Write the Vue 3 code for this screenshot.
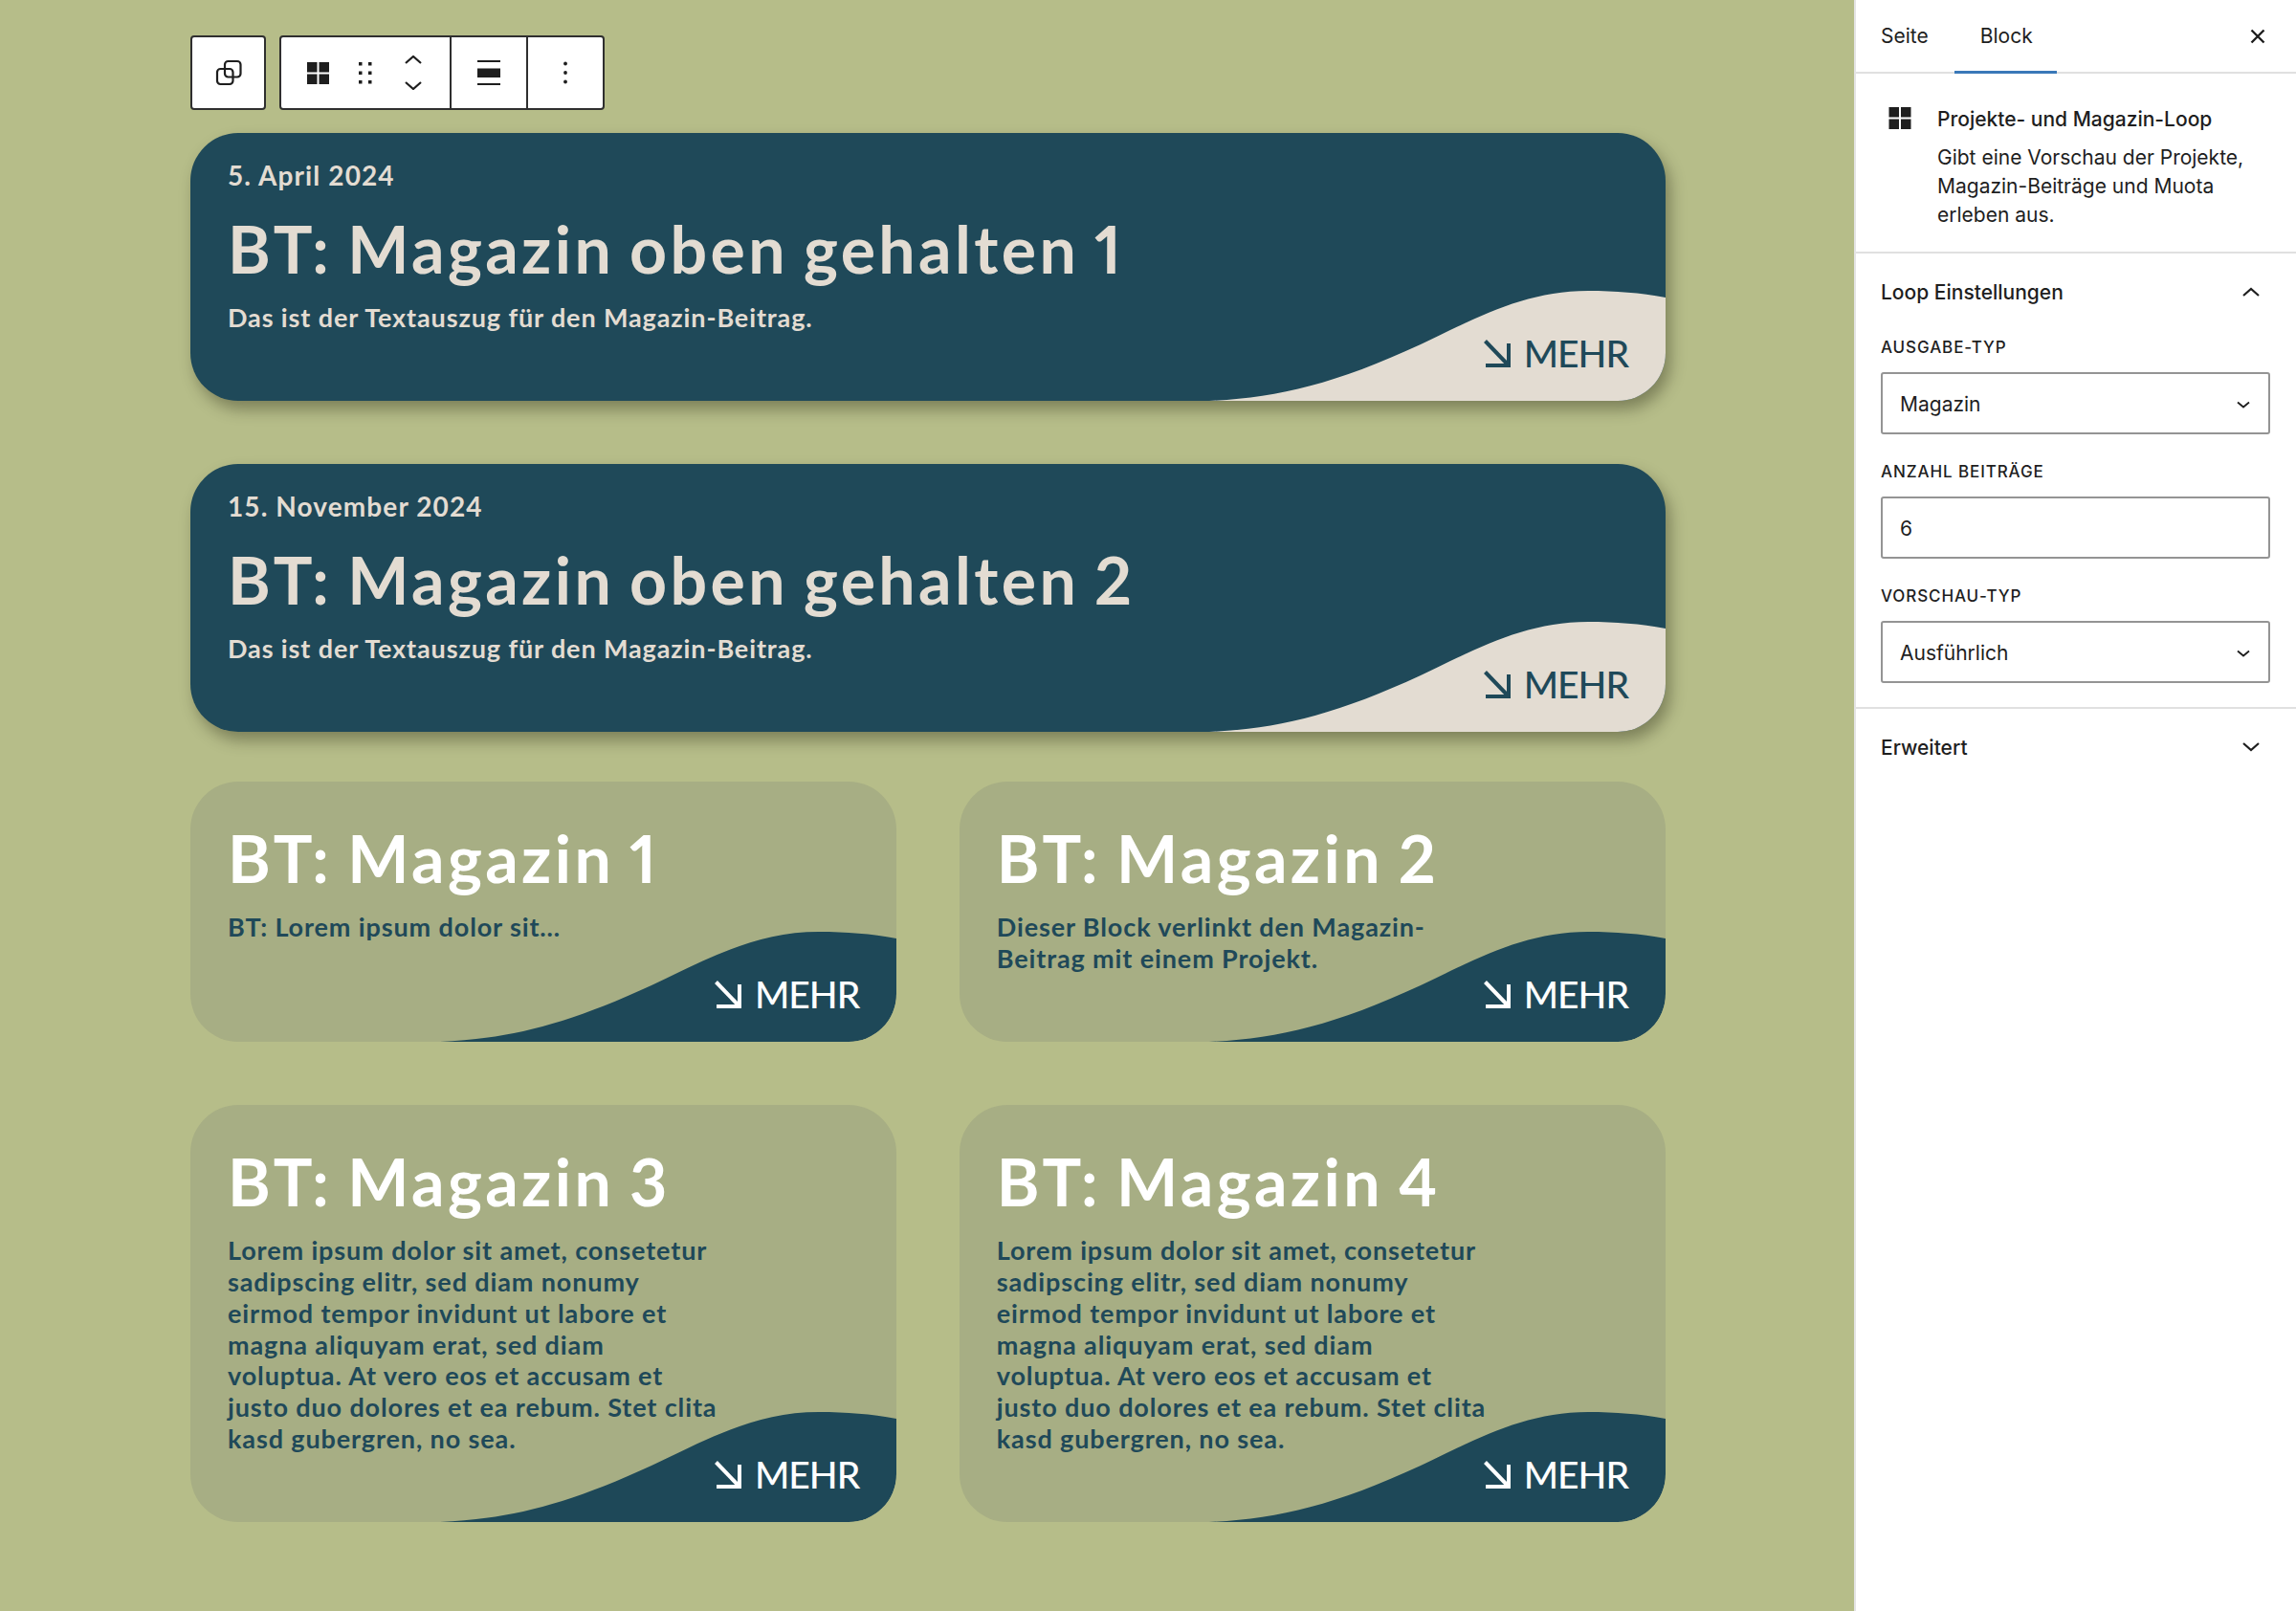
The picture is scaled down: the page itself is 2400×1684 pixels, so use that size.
<script setup>
const featured = [
  { id: 1, date: '5. April 2024', title: 'BT: Magazin oben gehalten 1', text: 'Das ist der Textauszug für den Magazin-Beitrag.' },
  { id: 2, date: '15. November 2024', title: 'BT: Magazin oben gehalten 2', text: 'Das ist der Textauszug für den Magazin-Beitrag.' },
];

const lorem = 'Lorem ipsum dolor sit amet, consetetur\nsadipscing elitr, sed diam nonumy\neirmod tempor invidunt ut labore et\nmagna aliquyam erat, sed diam\nvoluptua. At vero eos et accusam et\njusto duo dolores et ea rebum. Stet clita\nkasd gubergren, no sea.';

const posts = [
  { id: 1, title: 'BT: Magazin 1', text: 'BT: Lorem ipsum dolor sit…' },
  { id: 2, title: 'BT: Magazin 2', text: 'Dieser Block verlinkt den Magazin-\nBeitrag mit einem Projekt.' },
  { id: 3, title: 'BT: Magazin 3', text: lorem },
  { id: 4, title: 'BT: Magazin 4', text: lorem },
];

const wave = 'M0 115C70 112 130 98 221 56C280 28 330 0 396 0C425 0 450 2 477 7V115H0Z';
</script>

<template>
  <div class="editor">
    <main class="canvas">
      <div class="toolbar">
        <div class="tool-group single">
          <svg width="28" height="28" viewBox="0 0 28 28" fill="none" stroke="#1e1e1e" stroke-width="2.2">
            <rect x="2" y="10" width="16.5" height="16" rx="3.5" />
            <rect x="10" y="2" width="16.5" height="16.5" rx="3.5" />
          </svg>
        </div>
        <div class="tool-group">
          <div class="tool-cell first">
            <svg width="23" height="23" viewBox="0 0 23 23" fill="#1e1e1e">
              <rect width="10.5" height="10.5" />
              <rect x="12.5" width="10.5" height="10.5" />
              <rect y="12.5" width="10.5" height="10.5" />
              <rect x="12.5" y="12.5" width="10.5" height="10.5" />
            </svg>
            <svg width="14" height="24" viewBox="0 0 14 24" fill="#1e1e1e">
              <rect x="0" y="1" width="3.5" height="3.5" /><rect x="10" y="1" width="3.5" height="3.5" />
              <rect x="0" y="10.5" width="3.5" height="3.5" /><rect x="10" y="10.5" width="3.5" height="3.5" />
              <rect x="0" y="20" width="3.5" height="3.5" /><rect x="10" y="20" width="3.5" height="3.5" />
            </svg>
            <svg width="18" height="36" viewBox="0 0 18 36" fill="none" stroke="#1e1e1e" stroke-width="2.2">
              <path d="M1 8L9 1L17 8" />
              <path d="M1 28L9 35L17 28" />
            </svg>
          </div>
          <div class="tool-cell align">
            <svg width="24" height="26" viewBox="0 0 24 26" fill="#1e1e1e">
              <rect width="24" height="2" />
              <rect y="8.5" width="24" height="9.5" />
              <rect y="24" width="24" height="2" />
            </svg>
          </div>
          <div class="tool-cell more">
            <svg width="4" height="24" viewBox="0 0 4 24" fill="#1e1e1e">
              <circle cx="2" cy="2.5" r="1.9" />
              <circle cx="2" cy="12" r="1.9" />
              <circle cx="2" cy="21.5" r="1.9" />
            </svg>
          </div>
        </div>
      </div>

      <div class="featured-list">
        <article v-for="item in featured" :key="item.id" class="card featured">
          <p class="date">{{ item.date }}</p>
          <h2>{{ item.title }}</h2>
          <p class="excerpt">{{ item.text }}</p>
          <svg class="wave" width="477" height="115" viewBox="0 0 477 115"><path :d="wave" /></svg>
          <span class="more-link">
            <svg width="28" height="29" viewBox="0 0 28 29" fill="none" stroke="currentColor" stroke-width="4">
              <path d="M1.5 1.5L26 27" />
              <path d="M26 4V27H2" />
            </svg>
            MEHR
          </span>
        </article>
      </div>

      <div class="post-grid">
        <article v-for="post in posts" :key="post.id" class="card post">
          <h2>{{ post.title }}</h2>
          <p class="excerpt">{{ post.text }}</p>
          <svg class="wave" width="477" height="115" viewBox="0 0 477 115"><path :d="wave" /></svg>
          <span class="more-link">
            <svg width="28" height="29" viewBox="0 0 28 29" fill="none" stroke="currentColor" stroke-width="4">
              <path d="M1.5 1.5L26 27" />
              <path d="M26 4V27H2" />
            </svg>
            MEHR
          </span>
        </article>
      </div>
    </main>

    <aside class="sidebar">
      <div class="tabs">
        <span class="tab">Seite</span>
        <span class="tab active">Block</span>
        <svg class="close" width="16" height="16" viewBox="0 0 16 16" fill="none" stroke="#1e1e1e" stroke-width="2.4">
          <path d="M1.5 1.5L14.5 14.5M14.5 1.5L1.5 14.5" />
        </svg>
      </div>

      <section class="block-info">
        <svg width="24" height="23" viewBox="0 0 23 23" fill="#1e1e1e">
          <rect width="10.5" height="10.5" />
          <rect x="12.5" width="10.5" height="10.5" />
          <rect y="12.5" width="10.5" height="10.5" />
          <rect x="12.5" y="12.5" width="10.5" height="10.5" />
        </svg>
        <div>
          <h3>Projekte- und Magazin-Loop</h3>
          <p>Gibt eine Vorschau der Projekte,<br />Magazin-Beiträge und Muota<br />erleben aus.</p>
        </div>
      </section>

      <section class="panel">
        <div class="panel-head">
          <span>Loop Einstellungen</span>
          <svg width="18" height="10" viewBox="0 0 18 10" fill="none" stroke="#1e1e1e" stroke-width="2.2">
            <path d="M1 9L9 2L17 9" />
          </svg>
        </div>

        <label class="field-label">Ausgabe-Typ</label>
        <div class="field">
          Magazin
          <svg width="14" height="8" viewBox="0 0 14 8" fill="none" stroke="#1e1e1e" stroke-width="1.8">
            <path d="M1 1.5L7 6.5L13 1.5" />
          </svg>
        </div>

        <label class="field-label">Anzahl Beiträge</label>
        <div class="field">6</div>

        <label class="field-label">Vorschau-Typ</label>
        <div class="field">
          Ausführlich
          <svg width="14" height="8" viewBox="0 0 14 8" fill="none" stroke="#1e1e1e" stroke-width="1.8">
            <path d="M1 1.5L7 6.5L13 1.5" />
          </svg>
        </div>
      </section>

      <div class="panel-head closed">
        <span>Erweitert</span>
        <svg width="18" height="10" viewBox="0 0 18 10" fill="none" stroke="#1e1e1e" stroke-width="2.2">
          <path d="M1 1L9 8L17 1" />
        </svg>
      </div>
    </aside>
  </div>
</template>

<style scoped>
.editor {
  display: flex;
  width: 2400px;
  min-height: 1684px;
  background: #b6bd89;
}

.canvas {
  width: 1938px;
  box-sizing: border-box;
  padding: 37px 197px 0 199px;
  font-family: Lato, "Open Sans", sans-serif;
}

/* 블록 툴바 */
.toolbar {
  display: flex;
  gap: 14px;
  margin-bottom: 24px;
}

.tool-group {
  display: flex;
  box-sizing: border-box;
  width: 340px;
  height: 78px;
  background: #fff;
  border: 2px solid #2f2f2f;
  border-radius: 4px;
}

.tool-group.single {
  width: 79px;
  align-items: center;
  justify-content: center;
}

.tool-cell {
  display: flex;
  align-items: center;
  justify-content: center;
  height: 100%;
  box-sizing: border-box;
}

.tool-cell.first {
  width: 176px;
  justify-content: flex-start;
  padding-left: 27px;
  gap: 31px;
}

.tool-cell.first svg:nth-child(3) {
  margin-left: 3px;
}

.tool-cell.align,
.tool-cell.more {
  width: 80px;
  border-left: 2px solid #2f2f2f;
}

/* 카드 */
.featured-list {
  display: flex;
  flex-direction: column;
  gap: 66px;
  margin-bottom: 52px;
}

.post-grid {
  display: grid;
  grid-template-columns: repeat(2, 1fr);
  gap: 66px 65.5px;
}

.card {
  position: relative;
  overflow: hidden;
  box-sizing: border-box;
  border-radius: 50px;
  padding: 40px 39px 70px;
}

.card h2 {
  margin: 0 0 16px;
  font-size: 68px;
  line-height: 80px;
  font-weight: 700;
  letter-spacing: 3.4px;
  word-spacing: -4px;
  font-variant-numeric: proportional-nums;
}

.excerpt {
  margin: 0;
  font-size: 27px;
  line-height: 32.9px;
  font-weight: 700;
  letter-spacing: 0.88px;
  white-space: pre-line;
}

.featured {
  height: 280px;
  padding-top: 27px;
  background: #1f4959;
  color: #e3dcd2;
  overflow: visible;
  box-shadow: 5px 9px 16px rgba(40, 40, 20, 0.4);
}

.featured .date {
  margin: 0 0 20px;
  font-size: 28px;
  line-height: 34px;
  font-weight: 700;
  letter-spacing: 1.1px;
}

.post {
  background: #a7ae84;
}

.post h2 {
  color: #fff;
}

.post .excerpt {
  color: #1f4959;
}

.wave {
  position: absolute;
  right: 0;
  bottom: 0;
  display: block;
  border-bottom-right-radius: 50px;
}

.featured .wave path {
  fill: #e3dcd2;
}

.post .wave path {
  fill: #1e4858;
}

.more-link {
  position: absolute;
  right: 39px;
  bottom: 35px;
  display: flex;
  align-items: flex-end;
  gap: 14px;
  font-size: 39px;
  line-height: 29px;
  font-weight: 500;
  letter-spacing: -1px;
}

.featured .more-link {
  color: #1f4959;
}

.post .more-link {
  color: #fff;
}

/* 사이드바 */
.sidebar {
  width: 462px;
  box-sizing: border-box;
  background: #fff;
  border-left: 2px solid #e4e4e4;
  color: #1e1e1e;
  font-family: Inter, "Liberation Sans", sans-serif;
  font-size: 21px;
}

.tabs {
  position: relative;
  display: flex;
  height: 77px;
  box-sizing: border-box;
  border-bottom: 2px solid #e0e0e0;
}

.tab {
  height: 77px;
  box-sizing: border-box;
  padding: 0 25px 0 27px;
  line-height: 75px;
}

.tab:first-child {
  padding: 0 27px 0 26px;
}

.tab.active {
  border-bottom: 3px solid #3a78b8;
}

.close {
  position: absolute;
  top: 30px;
  right: 32px;
}

.block-info {
  display: flex;
  gap: 27px;
  height: 188px;
  box-sizing: border-box;
  padding: 35px 26px 0 34px;
  border-bottom: 2px solid #e0e0e0;
}

.block-info h3 {
  margin: 0 0 12px;
  font-size: 21px;
  line-height: 26px;
  font-weight: 500;
}

.block-info p {
  margin: 0;
  line-height: 30px;
}

.panel {
  padding: 0 27px 25px 26px;
  border-bottom: 2px solid #e0e0e0;
}

.panel-head {
  display: flex;
  align-items: center;
  justify-content: space-between;
  height: 80px;
  margin-bottom: 5px;
  font-weight: 500;
}

.panel-head svg {
  margin-right: 11px;
}

.panel-head.closed {
  padding: 0 27px 0 26px;
}

.field-label {
  display: block;
  height: 26px;
  margin-bottom: 13px;
  font-size: 17px;
  line-height: 26px;
  font-weight: 500;
  letter-spacing: 0.9px;
  text-transform: uppercase;
}

.field {
  display: flex;
  align-items: center;
  justify-content: space-between;
  box-sizing: border-box;
  height: 65px;
  padding: 2px 19px 0 18px;
  margin-bottom: 26px;
  border: 2px solid #949494;
  border-radius: 3px;
}

.panel .field:last-child {
  margin-bottom: 0;
}
</style>

<style>
body {
  background: #b6bd89;
}
</style>
